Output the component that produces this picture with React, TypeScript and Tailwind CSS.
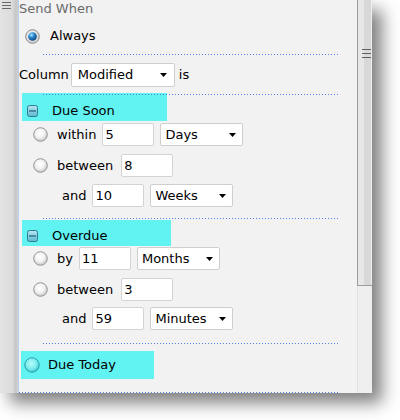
import React from "react";

function Dots({ className }: { className: string }) {
  return (
    <div
      className={
        "relative z-10 h-px bg-[image:repeating-linear-gradient(90deg,#4d7fdc_0px,#4d7fdc_1px,transparent_1px,transparent_3px)] " +
        className
      }
    />
  );
}

function Radio() {
  return (
    <svg width="15" height="15" viewBox="0 0 15 15" className="shrink-0">
      <defs>
        <radialGradient id="ru" cx="45%" cy="40%" r="60%">
          <stop offset="0" stopColor="#ffffff" />
          <stop offset="0.55" stopColor="#f2f2f2" />
          <stop offset="1" stopColor="#c4c4c4" />
        </radialGradient>
      </defs>
      <circle cx="7.5" cy="7.5" r="6.8" fill="url(#ru)" stroke="#969696" strokeWidth="1" />
    </svg>
  );
}

function RadioChecked() {
  return (
    <svg width="15" height="15" viewBox="0 0 15 15" className="shrink-0">
      <defs>
        <radialGradient id="rc" cx="45%" cy="40%" r="60%">
          <stop offset="0" stopColor="#ffffff" />
          <stop offset="1" stopColor="#cdcdcd" />
        </radialGradient>
        <radialGradient id="rb" cx="38%" cy="32%" r="70%">
          <stop offset="0" stopColor="#a8e4ff" />
          <stop offset="0.45" stopColor="#2a8ad0" />
          <stop offset="1" stopColor="#0b3f78" />
        </radialGradient>
      </defs>
      <circle cx="7.5" cy="7.5" r="6.8" fill="url(#rc)" stroke="#8c8c8c" strokeWidth="1" />
      <circle cx="7.5" cy="7.5" r="4.3" fill="url(#rb)" />
    </svg>
  );
}

function RadioCyan() {
  return (
    <svg width="16" height="16" viewBox="0 0 16 16" className="shrink-0">
      <defs>
        <radialGradient id="rt" cx="45%" cy="40%" r="60%">
          <stop offset="0" stopColor="#b6fbfb" />
          <stop offset="0.6" stopColor="#7eeeee" />
          <stop offset="1" stopColor="#3cc6cc" />
        </radialGradient>
      </defs>
      <circle cx="8" cy="8" r="7.2" fill="url(#rt)" stroke="#2aa2aa" strokeWidth="1" />
    </svg>
  );
}

function Minus() {
  return (
    <svg width="11" height="12" viewBox="0 0 11 12" className="shrink-0">
      <defs>
        <linearGradient id="mg" x1="0" y1="0" x2="0" y2="1">
          <stop offset="0" stopColor="#b6e6f2" />
          <stop offset="1" stopColor="#5cb8d0" />
        </linearGradient>
      </defs>
      <rect x="0.5" y="0.5" width="10" height="11" rx="2" fill="url(#mg)" stroke="#2c7d92" />
      <line x1="2" y1="6" x2="9" y2="6" stroke="#1c5f72" strokeWidth="1.2" />
    </svg>
  );
}

function Arrow() {
  return (
    <svg width="7" height="4" viewBox="0 0 7 4" className="shrink-0">
      <path d="M0 0H7L3.5 4Z" fill="#000" />
    </svg>
  );
}

function Input({ v, className }: { v: string; className: string }) {
  return (
    <div
      className={
        "w-[52px] h-[23px] bg-white border border-[#d3d3d3] rounded-[2px] flex items-center pl-[2px] text-black " +
        className
      }
    >
      {v}
    </div>
  );
}

function Select({ v, className }: { v: string; className: string }) {
  return (
    <div
      className={
        "bg-white border border-[#cfcfcf] rounded-[2px] flex items-center justify-between pl-[4px] pr-[6px] text-black " +
        className
      }
    >
      <span>{v}</span>
      <Arrow />
    </div>
  );
}

export default function App() {
  return (
    <div className="w-[400px] h-[420px] bg-white overflow-hidden font-['DejaVu_Sans',sans-serif] text-[13px] text-black">
      <div className="flex w-[372px] h-[393px] shadow-[10px_10px_16px_rgba(0,0,0,0.5)]">
        {/* left strip */}
        <div className="w-[18px] h-full bg-[image:linear-gradient(90deg,#e3e3e3_0px,#dcdcdc_12px,#c5c5c5_16px,#d3d3d3_18px)]">
          <svg width="12" height="12" viewBox="0 0 12 12" className="ml-[1px] mt-[1px]">
            <line x1="1" y1="1.5" x2="10" y2="1.5" stroke="#6a6a6a" />
            <line x1="1" y1="4.5" x2="10" y2="4.5" stroke="#6a6a6a" />
            <line x1="1" y1="7.5" x2="10" y2="7.5" stroke="#6a6a6a" />
          </svg>
        </div>

        {/* main panel */}
        <div className="flex-1 h-full bg-[#f2f2f2] border-l border-[#b6cff0] flex flex-col">
          <div className="h-[18px] leading-[18px] text-[#6b6b6b]">Send When</div>

          <div className="h-[36px] flex items-center pl-[6px]">
            <RadioChecked />
            <span className="ml-[10px]">Always</span>
          </div>

          <Dots className="ml-[24px] mr-[18px]" />

          <div className="mt-[8px] h-[24px] flex items-center">
            <span>Column</span>
            <Select v="Modified" className="ml-[2px] w-[104px] h-[24px] pl-[6px] pr-[7px]" />
            <span className="ml-[4px]">is</span>
          </div>

          <Dots className="mt-[7px] ml-[24px] mr-[18px]" />

          {/* Due Soon */}
          <div className="-mt-[2px] ml-[3px] w-[145px] h-[28px] bg-[#61f2f2] flex items-center pt-[7px] pl-[5px]">
            <Minus />
            <span className="ml-[14px]">Due Soon</span>
          </div>

          <div className="mt-[2px] h-[23px] flex items-center pl-[14px]">
            <Radio />
            <span className="ml-[9px]">within</span>
            <Input v="5" className="ml-[6px]" />
            <Select v="Days" className="ml-[6px] w-[83px] h-[23px]" />
          </div>

          <div className="mt-[8px] h-[23px] flex items-center pl-[14px]">
            <Radio />
            <span className="ml-[9px]">between</span>
            <Input v="8" className="ml-[8px]" />
          </div>

          <div className="mt-[7px] h-[23px] flex items-center pl-[43px]">
            <span>and</span>
            <Input v="10" className="ml-[6px]" />
            <Select v="Weeks" className="ml-[6px] w-[83px] h-[23px]" />
          </div>

          <Dots className="mt-[11px] ml-[24px] mr-[18px]" />

          {/* Overdue */}
          <div className="mt-[1px] ml-[3px] w-[149px] h-[26px] bg-[#61f2f2] flex items-center pt-[5px] pl-[5px]">
            <Minus />
            <span className="ml-[14px]">Overdue</span>
          </div>

          <div className="mt-[1px] h-[23px] flex items-center pl-[14px]">
            <Radio />
            <span className="ml-[9px]">by</span>
            <Input v="11" className="ml-[6px]" />
            <Select v="Months" className="ml-[6px] w-[83px] h-[23px]" />
          </div>

          <div className="mt-[8px] h-[23px] flex items-center pl-[14px]">
            <Radio />
            <span className="ml-[9px]">between</span>
            <Input v="3" className="ml-[8px]" />
          </div>

          <div className="mt-[6px] h-[23px] flex items-center pl-[43px]">
            <span>and</span>
            <Input v="59" className="ml-[6px]" />
            <Select v="Minutes" className="ml-[6px] w-[83px] h-[23px]" />
          </div>

          <Dots className="mt-[13px] ml-[24px] mr-[18px]" />

          {/* Due Today */}
          <div className="mt-[7px] ml-[2px] w-[133px] h-[28px] bg-[#61f2f2] flex items-center pl-[3px]">
            <RadioCyan />
            <span className="ml-[8px]">Due Today</span>
          </div>

          <Dots className="mt-auto mr-[18px]" />
        </div>

        {/* scrollbar */}
        <div className="w-[15px] h-full flex flex-col">
          <div className="h-[286px] border-l border-b border-[#9c9c9c] bg-[image:linear-gradient(90deg,#e7e7e7_0px,#e7e7e7_6px,#d8d8d8_6px,#d8d8d8_13px,#eeeeee_13px)] flex flex-col pt-[49px] pl-[4px] gap-[3px]">
            <div className="h-px w-[9px] bg-[#5e5e5e]" />
            <div className="h-px w-[9px] bg-[#5e5e5e]" />
            <div className="h-px w-[9px] bg-[#5e5e5e]" />
          </div>
          <div className="flex-1 bg-[#efefef] border-l border-[#e0e0e0]" />
        </div>
      </div>
    </div>
  );
}
